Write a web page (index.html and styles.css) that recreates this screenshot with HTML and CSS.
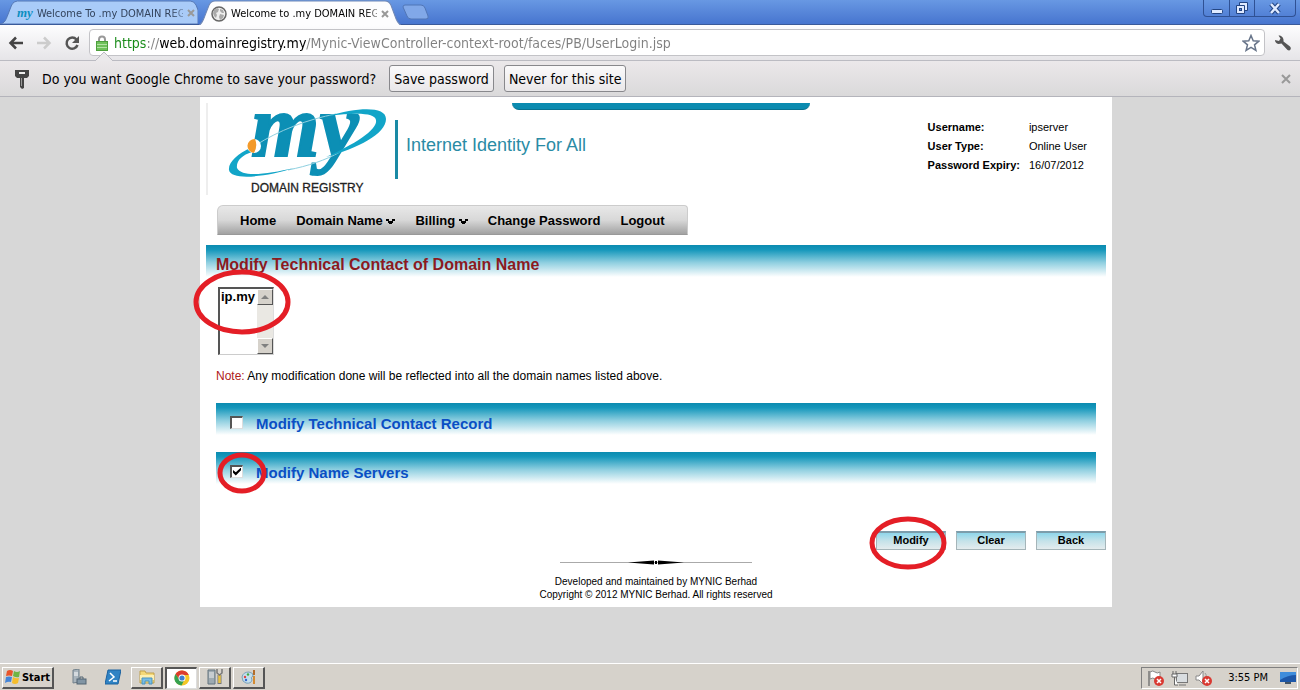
FILE: index.html
```html
<!DOCTYPE html>
<html lang="en">
<head>
  <meta charset="UTF-8">
  <title>Welcome to .my DOMAIN REGISTRY</title>
  <link rel="stylesheet" href="styles.css">
</head>
<body>
  <div class="tabstrip">
    <div class="tab">
      <svg class="tab-shape" viewBox="0 0 204 24" preserveAspectRatio="none"><path d="M0 24 C5 23 6 20 8 15 L12 5 Q14 1 18 1 H196 Q200 1 202 5 L204 10 V24 Z" fill="#a9cbf8" stroke="#5377b5"/></svg>
      <span class="my-icon">my</span>
      <a href="#" class="tab-title">Welcome To .my DOMAIN REG</a>
      <button class="tab-close" aria-label="Close tab"><svg width="8" height="8" viewBox="0 0 8 8"><path d="M1 1L7 7M7 1L1 7"/></svg></button>
    </div>
    <div class="tab active">
      <svg class="tab-shape" viewBox="0 0 204 24" preserveAspectRatio="none"><path d="M0 25 C4 23 5 20 7 15 L11 5 Q13 1 17 1 H187 Q191 1 193 5 L198 18 Q200 23 204 25 Z" fill="#fdfdfe" stroke="#6f87b5"/></svg>
      <svg class="globe" width="16" height="16" viewBox="0 0 16 16"><circle cx="8" cy="8" r="7" fill="#eee" stroke="#666" stroke-width="1.5"/><path d="M3 4L6 2 8 3 7 6 5 7 6 9 5 12 3 10 2 7ZM9 3L12 4 13 7 11 7 9 5ZM9 8L13 9 12 12 9 14 8 11Z" fill="#aaa"/></svg>
      <a href="#" class="tab-title">Welcome to .my DOMAIN REG</a>
      <button class="tab-close" aria-label="Close tab"><svg width="8" height="8" viewBox="0 0 8 8"><path d="M1 1L7 7M7 1L1 7"/></svg></button>
    </div>
    <button class="new-tab" aria-label="New tab"><svg width="28" height="16" viewBox="0 0 28 16"><path d="M3 1H19Q22 1 23 4L26 12Q27 15 24 15H9Q6 15 5 12L1 3Q1 1 3 1Z" fill="#81a8e8" stroke="#5176b6"/></svg></button>
    <div class="window-buttons">
      <button aria-label="Minimize"><svg width="14" height="14" viewBox="0 0 14 14"><rect x="1.5" y="8.5" width="11" height="4" rx="1" fill="#dfeaff" stroke="#234583"/></svg></button>
      <button aria-label="Restore"><svg width="14" height="14" viewBox="0 0 14 14"><path d="M4.5 1.5H12.5V9.5H4.5Z" fill="#dfeaff" stroke="#234583"/><path d="M1.5 4.5H9.5V12.5H1.5Z" fill="#dfeaff" stroke="#234583"/><rect x="4.5" y="7.5" width="2" height="2" fill="#5f8ad8" stroke="#234583"/></svg></button>
      <button class="wide" aria-label="Close window"><svg width="14" height="14" viewBox="0 0 14 14"><path d="M3 3L11 12M11 3L3 12" stroke="#234583" stroke-width="4.5"/><path d="M3 3L11 12M11 3L3 12" stroke="#dfeaff" stroke-width="2.5"/></svg></button>
    </div>
  </div>

  <div class="toolbar">
    <div class="nav-buttons">
      <button class="icon-button" aria-label="Back"><svg width="16" height="16" viewBox="0 0 16 16"><path d="M15 8H3M8 2.5L2.5 8L8 13.5" fill="none" stroke="#444" stroke-width="2.5"/></svg></button>
      <button class="icon-button" aria-label="Forward"><svg width="16" height="16" viewBox="0 0 16 16"><path d="M1 8H13M8 2.5L13.5 8L8 13.5" fill="none" stroke="#ccc" stroke-width="2.5"/></svg></button>
      <button class="icon-button" aria-label="Reload"><svg width="16" height="16" viewBox="0 0 16 16"><path d="M12.5 4.5A5.6 5.6 0 1 0 13.5 10" fill="none" stroke="#555" stroke-width="2.5"/><path d="M15 1V8H8Z" fill="#555"/></svg></button>
    </div>
    <div class="omnibox">
      <svg width="12" height="16" viewBox="0 0 12 16"><path d="M3 8V4.5Q3 1.5 6 1.5Q9 1.5 9 4.5V8" fill="none" stroke="#999" stroke-width="2"/><rect x="0.5" y="6.5" width="11" height="9" fill="#6fc05b" stroke="#4d9f3c"/><path d="M1 9.5H11M1 12.5H11" stroke="#b3e3a4"/></svg>
      <input type="text" class="url" aria-label="Address" value="https://web.domainregistry.my/Mynic-ViewController-context-root/faces/PB/UserLogin.jsp">
      <button class="icon-button" aria-label="Bookmark this page"><svg width="18" height="18" viewBox="0 0 18 18"><path d="M9 1.5L11.2 6.8L16.8 7.2L12.5 10.8L13.9 16.3L9 13.3L4.1 16.3L5.5 10.8L1.2 7.2L6.8 6.8Z" fill="#fff" stroke="#68758a" stroke-width="1.5"/></svg></button>
    </div>
    <button class="icon-button" aria-label="Settings"><svg width="18" height="18" viewBox="0 0 18 18"><path d="M1 6Q1 9 4.5 10L7.5 9.5L13.5 16Q15.5 17 16.5 15.5Q17.5 14 16 12.5L9.5 7.5Q10 3 6 1.5L4.5 1.5L6.5 4.5L5 7Z" fill="#555"/></svg></button>
  </div>

  <div class="infobar">
    <svg class="infobar-arrow" width="18" height="10" viewBox="0 0 18 10"><path d="M0 10L9 1L18 10" fill="#ebe9eb" stroke="#bbbbc2"/></svg>
    <svg width="14" height="20" viewBox="0 0 14 20"><path d="M0 1H14V7L12 9H9V19L7 20L5 18V9H2L0 7Z" fill="#444"/><rect x="4" y="3" width="6" height="2" fill="#eee"/><path d="M6.5 9V17" stroke="#999"/></svg>
    <span class="infobar-text">Do you want Google Chrome to save your password?</span>
    <button class="infobar-button">Save password</button>
    <button class="infobar-button">Never for this site</button>
    <button class="infobar-close" aria-label="Close"><svg width="10" height="10" viewBox="0 0 10 10"><path d="M1 1L9 9M9 1L1 9"/></svg></button>
  </div>

  <main class="viewport">
    <div class="page">
      <header class="header">
        <div class="top-tab"></div>
        <div class="brand-row">
          <svg class="logo" width="160" height="86" viewBox="0 0 160 86">
            <text class="logo-my" x="23" y="46">my</text>
            <path d="M28 35C50 21 80 9 108 4M60 60C80 56 98 50 112 42" fill="none" stroke="#8fd0e0"/>
            <path fill="#12a5c8" d="M100 6C130 -3 158 -4 158 9C158 24 130 38 98 47C125 35 150 20 148 10C147 3 130 2 100 6Z"/>
            <path fill="#12a5c8" d="M22 38C10 44 0 52 1 60C3 71 38 67 66 58C40 64 14 68 9 58C8 51 14 45 24 42Z"/>
            <circle cx="26" cy="36" r="7" fill="#fff"/>
            <path d="M27 29A7 7 0 0 0 26 43Q30 36 27 29Z" fill="#f39a2b"/>
            <text class="logo-sub" x="23" y="82">DOMAIN REGISTRY</text>
          </svg>
          <span class="slogan">Internet Identity For All</span>
          <table class="user-info">
            <tr><th scope="row">Username:</th><td>ipserver</td></tr>
            <tr><th scope="row">User Type:</th><td>Online User</td></tr>
            <tr><th scope="row">Password Expiry:</th><td>16/07/2012</td></tr>
          </table>
        </div>
      </header>

      <nav class="menu">
        <a href="#">Home</a>
        <a href="#">Domain Name <svg width="9" height="6" viewBox="0 0 9 6"><path d="M0 0H3V2H6V0H9V2H7V4H6V5H3V4H2V2H0Z"/></svg></a>
        <a href="#">Billing <svg width="9" height="6" viewBox="0 0 9 6"><path d="M0 0H3V2H6V0H9V2H7V4H6V5H3V4H2V2H0Z"/></svg></a>
        <a href="#">Change Password</a>
        <a href="#">Logout</a>
      </nav>

      <form class="content">
        <h1 class="band title">Modify Technical Contact of Domain Name</h1>

        <div class="domains">
          <select class="domain-list" size="4" aria-label="Domain names">
            <option>ip.my</option>
          </select>
          <div class="scrollbar">
            <span class="scroll-button"><svg width="8" height="4" viewBox="0 0 8 4"><path d="M4 0L8 4H0Z"/></svg></span>
            <span class="scroll-button"><svg width="8" height="4" viewBox="0 0 8 4"><path d="M0 0H8L4 4Z"/></svg></span>
          </div>
          <svg class="ring ring-list" viewBox="0 0 98 66"><ellipse cx="49" cy="33" rx="46" ry="30"/></svg>
        </div>

        <p class="note"><span>Note:</span> Any modification done will be reflected into all the domain names listed above.</p>

        <div class="band option">
          <input type="checkbox" id="contact">
          <label for="contact">Modify Technical Contact Record</label>
        </div>
        <div class="band option">
          <input type="checkbox" id="servers" checked>
          <label for="servers">Modify Name Servers</label>
          <svg class="ring ring-check" viewBox="0 0 50 42"><ellipse cx="25" cy="21" rx="22" ry="18"/></svg>
        </div>

        <div class="actions">
          <button type="button">Modify</button>
          <button type="button">Clear</button>
          <button type="button">Back</button>
          <svg class="ring ring-modify" viewBox="0 0 78 54"><ellipse cx="39" cy="27" rx="36" ry="24"/></svg>
        </div>
      </form>

      <footer class="footer">
        <svg width="192" height="5" viewBox="0 0 192 5"><path d="M0 2.5H192" stroke="#aaa"/><path d="M68 2.5L94 0.5V4.5ZM124 2.5L98 0.5V4.5Z"/><rect x="95" y="1" width="2" height="3"/></svg>
        <p>Developed and maintained by MYNIC Berhad</p>
        <p>Copyright © 2012 MYNIC Berhad. All rights reserved</p>
      </footer>
    </div>
  </main>

  <div class="taskbar">
    <button class="start">
      <svg width="16" height="16" viewBox="0 0 16 16"><path d="M2 2Q5 0 8 2L7 7Q4 6 1 7Z" fill="#e8552b"/><path d="M9 2Q12 4 15 2L14 8Q11 9 8 7Z" fill="#6fb544"/><path d="M1 8Q4 7 7 8L6 13Q3 12 0 14Z" fill="#4384d8"/><path d="M8 8Q11 10 14 9L13 14Q10 16 7 14Z" fill="#f5bd2c"/></svg>
      Start
    </button>
    <button class="task quick" aria-label="Server Manager"><svg width="16" height="16" viewBox="0 0 16 16"><path d="M2 1L8 0V13L2 14Z" fill="#aab5bd" stroke="#71808b"/><path d="M3 4H7M3 6H7" stroke="#fff"/><rect x="6" y="10" width="9" height="5" fill="#8195a4" stroke="#536573"/><path d="M9 10V8H12V10" fill="none" stroke="#536573"/></svg></button>
    <button class="task quick" aria-label="PowerShell"><svg width="16" height="16" viewBox="0 0 16 16"><path d="M3 1H16L13 15H0Z" fill="#2f83c4" stroke="#1b62a0"/><path d="M5 4L9 8L4 12M8 12H12" fill="none" stroke="#fff" stroke-width="1.5"/></svg></button>
    <button class="task" aria-label="Explorer"><svg width="16" height="16" viewBox="0 0 16 16"><path d="M1 2H6L7 4H15V14H1Z" fill="#f5d978" stroke="#c1a04b"/><path d="M1 6H15V11H1Z" fill="#fdf0b2"/><path d="M3 15V9H13V15H10V12H6V15Z" fill="#77bce4" stroke="#4b93bf"/></svg></button>
    <button class="task pressed" aria-label="Chrome"><svg width="16" height="16" viewBox="0 0 16 16"><circle cx="8" cy="8" r="7.5" fill="#f4c726"/><path d="M1.5 4A7.5 7.5 0 0 1 14.8 5H8L5 9Z" fill="#dc3d2e"/><path d="M1.5 4A7.5 7.5 0 0 0 7.5 15.5L10.5 9.5L5 9Z" fill="#36a150"/><circle cx="8" cy="8" r="3.5" fill="#fff"/><circle cx="8" cy="8" r="2.6" fill="#3f7fd0"/></svg></button>
    <button class="task" aria-label="Server tools"><svg width="16" height="16" viewBox="0 0 16 16"><path d="M1 1H8V15H1Z" fill="#9eaab1" stroke="#65747e"/><path d="M2 4H7M2 6H7M2 8H7" stroke="#eee"/><path d="M12.5 6V15" stroke="#777" stroke-width="4"/><path d="M12.5 6V14" stroke="#e9c343" stroke-width="2.5"/><path d="M10 0V4L12.5 6L15 4V0" fill="none" stroke="#777" stroke-width="1.5"/></svg></button>
    <button class="task" aria-label="Paint"><svg width="16" height="16" viewBox="0 0 16 16"><path d="M1 8Q2 3 8 3Q13 4 12 7Q9 8 11 11Q10 15 5 14Q1 13 1 8Z" fill="#c3dfee" stroke="#7aa1b8"/><circle cx="4" cy="8" r="1.2" fill="#d44"/><circle cx="7" cy="5.5" r="1.2" fill="#4a4"/><circle cx="5" cy="11" r="1.2" fill="#36c"/><path d="M13 7V15" stroke="#d48b32" stroke-width="2"/><path d="M13 1V6" stroke="#b36d2b" stroke-width="2"/></svg></button>
    <div class="tray">
      <svg width="18" height="16" viewBox="0 0 18 16"><path d="M2 1V16" stroke="#777" stroke-width="1.5"/><path d="M3 2Q6 0 8 2T13 2V9Q10 11 8 9T3 9Z" fill="#fff" stroke="#888"/><circle cx="12" cy="11" r="5" fill="#d93a32"/><path d="M10 9L14 13M14 9L10 13" stroke="#fff" stroke-width="1.5"/></svg>
      <svg width="18" height="16" viewBox="0 0 18 16"><rect x="5.5" y="3.5" width="11" height="9" fill="#d9dde0" stroke="#777"/><path d="M8 15H15" stroke="#777"/><path d="M2 1V4M5 1V4M1 4H6V7H1ZM3.5 7V15H7" fill="#fff" stroke="#666"/></svg>
      <svg width="18" height="16" viewBox="0 0 18 16"><path d="M1 6H4L8 1V14L4 10H1Z" fill="#fff" stroke="#888"/><path d="M10 3Q12 5 11 7" fill="none" stroke="#999"/><circle cx="12" cy="11" r="5" fill="#d93a32"/><path d="M10 9L14 13M14 9L10 13" stroke="#fff" stroke-width="1.5"/></svg>
      <span class="clock">3:55 PM</span>
      <svg width="16" height="14" viewBox="0 0 16 14"><path d="M0 1H16V11H0Z" fill="#1d57a8"/><path d="M0 1H16V4Q8 4 0 9Z" fill="#3f8ddb"/><path d="M5 12H11" stroke="#456" stroke-width="2"/></svg>
    </div>
  </div>
</body>
</html>
```
FILE: styles.css
```css
* {
  box-sizing: border-box;
}

body {
  margin: 0;
  min-height: 100vh;
  display: flex;
  flex-direction: column;
  font-family: "Liberation Sans", Arial, sans-serif;
  background: #d7d7d7;
  color: #000;
}

button {
  padding: 0;
  border: none;
  background: none;
  font-family: inherit;
  color: inherit;
}

svg {
  flex: none;
}

a {
  color: inherit;
  text-decoration: none;
}

.tabstrip,
.toolbar,
.infobar,
.taskbar {
  display: flex;
  align-items: center;
  font-family: "DejaVu Sans Condensed", "Noto Sans", sans-serif;
}

/* browser tabs */
.tabstrip {
  height: 25px;
  background: linear-gradient(#6898e3, #4775cf);
  border-bottom: 1px solid #3a5a9a;
}

.tab {
  position: relative;
  display: flex;
  align-items: center;
  width: 198px;
  height: 24px;
  padding: 2px 0 0 17px;
  gap: 4px;
  font-size: 11px;
  color: #33435c;
}

.tab.active {
  z-index: 1;
  width: 204px;
  height: 25px;
  padding: 2px 10px 0 13px;
  align-self: flex-start;
  color: #000;
}

.tab-shape {
  position: absolute;
  inset: 0;
  width: 100%;
  height: 100%;
}

.my-icon {
  position: relative;
  font: italic bold 13px "Liberation Serif", serif;
  line-height: 12px;
  color: #0d8fc0;
}

.globe {
  position: relative;
}

.tab-title {
  position: relative;
  width: 146px;
  white-space: nowrap;
  mask-image: linear-gradient(90deg, #000 132px, transparent 156px);
}

.tab-close {
  position: relative;
  display: flex;
}

.tab-close path,
.infobar-close path {
  stroke: #999;
  stroke-width: 2;
}

.new-tab {
  display: flex;
}

.window-buttons {
  display: flex;
  align-self: flex-start;
  margin: 0 4px 0 auto;
  border: 1px solid #2f5194;
  border-top: none;
  border-radius: 0 0 4px 4px;
}

.window-buttons button {
  display: flex;
  align-items: center;
  justify-content: center;
  width: 25px;
  height: 16px;
  border-left: 1px solid #2f5194;
}

.window-buttons button:first-child {
  border-left: none;
}

.window-buttons .wide {
  width: 41px;
}

/* address bar */
.toolbar {
  height: 36px;
  padding: 0 8px;
  gap: 9px;
  background: linear-gradient(#fdfdfe, #e6e5e8);
  border-bottom: 1px solid #bbbbc2;
}

.nav-buttons {
  display: flex;
  gap: 12px;
}

.icon-button {
  display: flex;
}

.omnibox {
  flex: 1;
  display: flex;
  align-items: center;
  height: 27px;
  padding: 0 4px 0 6px;
  gap: 6px;
  background: #fff;
  border: 1px solid #c3c3c7;
  border-radius: 4px;
}

/* scheme green, host black, the rest grey */
.url {
  flex: 1;
  padding: 0;
  border: none;
  outline: none;
  font: 14px "DejaVu Sans Condensed", "Noto Sans", sans-serif;
  color: transparent;
  background: linear-gradient(90deg, #168a16 33px, #808080 33px 46px, #000 46px 192px, #808080 192px);
  background-clip: text;
  -webkit-background-clip: text;
}

/* save password bar */
.infobar {
  position: relative;
  height: 36px;
  padding: 0 9px 0 15px;
  gap: 10px;
  font-size: 14px;
  background: linear-gradient(#ebe8ea, #dad9da);
  border-bottom: 1px solid #b4b4bb;
}

.infobar-arrow {
  position: absolute;
  left: 95px;
  top: -10px;
}

.infobar-text {
  margin: 0 3px;
}

.infobar-button {
  height: 27px;
  padding: 0 4px;
  font-size: 14px;
  background: linear-gradient(#fbfafb, #e9e7e9);
  border: 1px solid #88888c;
  border-radius: 3px;
}

.infobar-close {
  display: flex;
  margin-left: auto;
}

/* web page */
.viewport {
  flex: 1;
  padding: 0 0 24px 12px;
}

.page {
  max-width: 912px;
  margin: 0 auto;
  padding: 6px 6px;
  background: #fff;
}

.header {
  height: 92px;
  padding-left: 8px;
  border-left: 2px solid #eee;
}

.top-tab {
  width: 298px;
  height: 7px;
  margin: 0 auto;
  background: #0b8bb0;
  border-bottom: 1px solid #08718f;
  border-radius: 0 0 12px 12px;
}

.brand-row {
  display: flex;
  align-items: flex-start;
  padding-left: 12px;
}

.logo {
  overflow: visible;
}

.logo-my {
  font: italic bold 88px "Liberation Serif", serif;
  fill: #0c8fb5;
  stroke: #0c8fb5;
  stroke-width: 2px;
}

.logo-sub {
  font: 12px "Liberation Sans", sans-serif;
  fill: #222;
  stroke: #222;
  stroke-width: 0.3px;
}

.slogan {
  height: 59px;
  margin: 10px 0 0 7px;
  padding-left: 8px;
  border-left: 3px solid #1a8aa5;
  font-size: 18px;
  line-height: 50px;
  color: #2a8ba5;
}

.user-info {
  margin: 7px 19px 0 auto;
  border-collapse: collapse;
  font-size: 11px;
}

.user-info th,
.user-info td {
  height: 19px;
  padding: 0;
  text-align: left;
}

.user-info th {
  padding-right: 9px;
}

.menu {
  display: flex;
  align-items: center;
  width: fit-content;
  height: 30px;
  margin: 10px 0 0 11px;
  padding: 0 22px;
  gap: 20px;
  font-size: 13px;
  font-weight: bold;
  background: linear-gradient(#e8e8e8, #d8d8d8 50%, #a2a2a2);
  border: 1px solid #ccc;
  border-bottom-color: #999;
  border-radius: 6px 4px 0 0;
}

.content {
  margin-top: 10px;
}

.band {
  height: 32px;
  background: linear-gradient(#0b8bb0, #1597bb 15%, #8fcfe0 55%, #fff);
}

.title {
  margin: 0;
  padding: 0 10px;
  font-size: 16px;
  line-height: 39px;
  color: #8b1a1f;
}

.domains {
  position: relative;
  display: flex;
  width: 56px;
  height: 68px;
  margin: 10px 0 0 12px;
  border: 2px solid #555;
  border-right: 1px solid #ddd;
  border-bottom: 1px solid #ccc;
}

.domain-list {
  flex: 1;
  min-width: 0;
  padding: 0;
  border: none;
  outline: none;
  overflow: hidden;
  background: #fff;
  font: 13px "Liberation Sans", Arial, sans-serif;
}

.domain-list option {
  padding: 0 0 0 1px;
  font-weight: bold;
  color: #000;
}

.scrollbar {
  display: flex;
  flex-direction: column;
  justify-content: space-between;
  background: #eae8e3;
}

.scroll-button {
  display: flex;
  align-items: center;
  justify-content: center;
  width: 16px;
  height: 16px;
  background: #d6d2cb;
  border: 1px solid #fff;
  border-right-color: #555;
  border-bottom-color: #555;
}

.scroll-button path {
  fill: #808080;
}

.note {
  margin: 13px 10px 19px;
  font-size: 12px;
  line-height: 16px;
}

.note span {
  color: #b02020;
}

.option {
  position: relative;
  display: flex;
  align-items: center;
  margin: 0 10px 17px;
  padding: 8px 14px 0;
  gap: 13px;
  font-size: 15px;
  font-weight: bold;
  color: #0a4fc4;
}

.option input {
  appearance: none;
  width: 13px;
  height: 13px;
  margin: 0 0 2px;
  background: #fff;
  border: 2px solid #555;
  border-right: 1px solid #ddd;
  border-bottom: 1px solid #ddd;
}

.option input:checked::after {
  content: "";
  display: block;
  width: 8px;
  height: 8px;
  margin: 1px;
  background: #000;
  clip-path: polygon(0 30%, 35% 60%, 100% 0, 100% 35%, 35% 100%, 0 65%);
}

.actions {
  position: relative;
  display: flex;
  justify-content: flex-end;
  gap: 10px;
  margin-top: 47px;
}

.actions button {
  width: 70px;
  height: 19px;
  padding-bottom: 2px;
  font-size: 11px;
  font-weight: bold;
  background: linear-gradient(#8fd6ea, #c5e2e9 50%, #e4ecee);
  border: 1px solid #a5b5b9;
  border-top: 2px solid #7c9dab;
}

/* red markers */
.ring {
  position: absolute;
  overflow: visible;
  pointer-events: none;
}

.ring ellipse {
  fill: none;
  stroke: #e41e26;
  stroke-width: 5px;
}

.ring-list {
  left: -27px;
  top: -20px;
  width: 98px;
}

.ring-check {
  left: 1px;
  top: 0;
  width: 50px;
}

.ring-modify {
  right: 159px;
  top: -15px;
  width: 78px;
}

.footer {
  display: flex;
  flex-direction: column;
  align-items: center;
  margin-top: 10px;
  font-size: 10px;
  line-height: 13px;
}

.footer svg {
  margin-bottom: 10px;
}

.footer p {
  margin: 0;
}

/* windows taskbar */
.taskbar {
  height: 27px;
  padding: 1px 2px 0;
  gap: 2px;
  background: #d6d2cb;
  border-top: 1px solid #fff;
}

.start,
.task {
  display: flex;
  align-items: center;
  justify-content: center;
  width: 32px;
  height: 22px;
  border: 1px solid #fff;
  border-right: 2px solid #555;
  border-bottom: 2px solid #555;
}

.start {
  width: 52px;
  margin-right: 7px;
  gap: 1px;
  font-size: 11px;
  font-weight: bold;
}

.quick {
  border-color: transparent;
}

.pressed {
  background: #fff;
  border: 2px solid #555;
  border-right: 1px solid #ddd;
  border-bottom: 1px solid #ddd;
}

.tray {
  display: flex;
  align-items: center;
  height: 22px;
  margin-left: auto;
  padding: 0 1px 0 5px;
  gap: 6px;
  font-size: 11px;
  border: 1px solid #808080;
  border-right-color: #fff;
  border-bottom-color: #fff;
}

.clock {
  margin: 0 6px 0 9px;
}
```
